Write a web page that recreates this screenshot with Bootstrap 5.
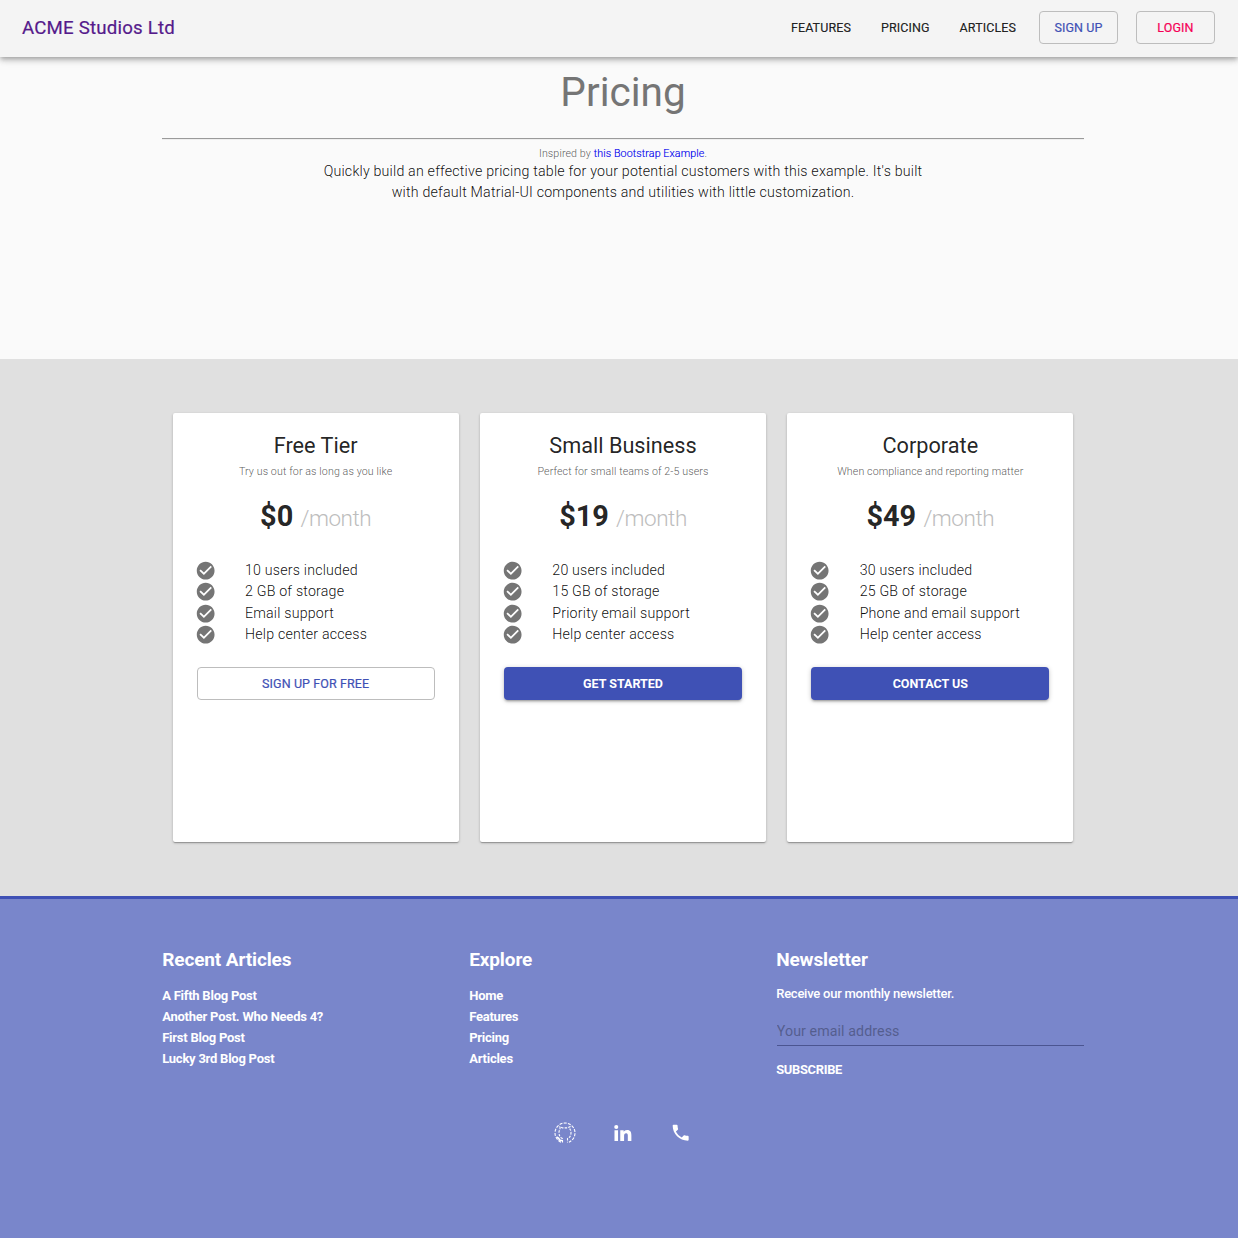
<!DOCTYPE html>
<html lang="en">
<head>
<meta charset="utf-8">
<meta name="viewport" content="width=device-width, initial-scale=1">
<title>ACME Studios Ltd - Pricing</title>
<link href="https://cdn.jsdelivr.net/npm/bootstrap@5.3.0/dist/css/bootstrap.min.css" rel="stylesheet">
<style>
body{font-family:Roboto,"Liberation Sans",sans-serif;font-size:14.22px;background:#fafafa;color:rgba(0,0,0,.87);height:1238px;overflow:hidden}
.site-bar{height:57px;padding:0 23px 2px 22px;background:#f4f4f4;box-shadow:0 2px 4px -1px rgba(0,0,0,.2),0 4px 5px 0 rgba(0,0,0,.14),0 1px 10px 0 rgba(0,0,0,.12);position:relative;z-index:2}
.site-bar .navbar-brand{font-size:18.67px;font-weight:400;letter-spacing:.2px;color:#551a8b;padding:0;line-height:30px;-webkit-text-stroke:.2px #551a8b}
.mui-btn{font-size:12.5px;font-weight:400;line-height:21px;padding:5px 14px;border:1px solid transparent;border-radius:4px;color:rgba(0,0,0,.87);text-transform:uppercase;letter-spacing:.1px;-webkit-text-stroke:.2px currentColor}
.mui-outline{border-color:#bdbdbd;min-width:79px}
.signup-link{margin-right:18px}
.indigo,.indigo:hover{color:#3f51b5}
.pink{color:#f50057}
.solid-indigo{background:#3f51b5;color:#fff;font-weight:700;letter-spacing:0;box-shadow:0 1px 5px rgba(0,0,0,.2),0 2px 2px rgba(0,0,0,.14),0 3px 1px -2px rgba(0,0,0,.12);-webkit-text-stroke:0}
.page-wrap{width:922px;margin-left:162px}
.hero{height:302px}
.hero h1{font-size:40.5px;line-height:48px;font-weight:400;color:#757575;padding-top:11px;margin:0}
.hero hr{margin:22px 0 6px;border-top:1px solid #9a9a9a;border-bottom:1px solid #eee;opacity:1}
.fine{font-size:10.67px;line-height:16px;font-weight:300;letter-spacing:.11px;color:rgba(0,0,0,.68)}
.fine a{color:#00e;text-decoration:none;-webkit-text-stroke:.15px #00e}
.body-light{font-size:14.22px;line-height:21.33px;font-weight:300;letter-spacing:.19px;color:rgba(0,0,0,.95)}
.hero .body-light{margin-top:-1px}
.tiers{background:#e0e0e0;height:537px;padding-top:54px}
.tier{width:286px;height:429px;background:#fff;border:0;border-radius:2px;padding:19px 24px;box-shadow:0 1px 3px rgba(0,0,0,.2),0 1px 1px rgba(0,0,0,.14),0 2px 1px -1px rgba(0,0,0,.12)}
.tier h2{font-size:21.7px;line-height:28px;font-weight:400;margin:0}
.price{font-size:28.9px;line-height:36px;font-weight:700;margin-top:18px}
.price span{font-size:22.5px;letter-spacing:-.45px;font-weight:300;color:#bdbdbd}
.perks{margin:24px 0 21.67px}
.perks li{height:21.33px;display:flex;align-items:center}
.perks svg{width:21.33px;height:21.33px;margin-left:-2px;margin-right:29px;fill:#757575;flex:none}
.site-foot{height:342px;background:#7986cb;border-top:3px solid #3f51b5;color:#fff;padding-top:47px}
.site-foot h3{font-size:19px;line-height:27px;font-weight:700;letter-spacing:-.12px;margin:0 0 12px}
.foot-col{width:307px;padding-left:.2px}
.foot-col a{display:block;color:#fff;text-decoration:none;line-height:21px}
.strong-sm{font-size:13px;font-weight:700;letter-spacing:-.24px}
.news-line{font-weight:500;line-height:21px;margin-top:-2px}
.mail{font-size:14.22px;letter-spacing:.08px;font-weight:400;background:none;border:0;border-bottom:1px solid #4b5591;border-radius:0;padding:0;height:30px;width:307px;display:block;color:#fff;margin:12px 0 13px .6px}
.mail::placeholder{color:#000;opacity:.3}
.mail:focus{outline:0}
.foot-col .subscribe{letter-spacing:-.3px;font-size:12.9px}
.socials{height:24px;margin-top:41px;padding-left:392.4px;gap:36px}
.socials svg{width:21.33px;height:21.33px;fill:#fff}
.socials .octo{width:22px;height:22px;fill:none;stroke:#fff;stroke-width:1.1}
</style>
</head>
<body>
<nav class="navbar site-bar d-flex align-items-center justify-content-between flex-nowrap">
  <a class="navbar-brand" href="#">ACME Studios Ltd</a>
  <div class="d-flex align-items-center">
    <a class="btn mui-btn" href="#">Features</a>
    <a class="btn mui-btn" href="#">Pricing</a>
    <a class="btn mui-btn me-2" href="#">Articles</a>
    <a class="btn mui-btn mui-outline signup-link indigo" href="#">Sign Up</a>
    <a class="btn mui-btn mui-outline pink" href="#">Login</a>
  </div>
</nav>
<main>
  <section class="hero text-center">
    <div class="page-wrap">
      <h1>Pricing</h1>
      <hr>
      <div class="fine">Inspired by <a href="#">this Bootstrap Example</a>.</div>
      <div class="body-light">Quickly build an effective pricing table for your potential customers with this example. It's built<br>with default Matrial-UI components and utilities with little customization.</div>
    </div>
  </section>
  <section class="tiers">
    <div class="page-wrap d-flex justify-content-around" id="tiers">
      <article class="card tier">
        <div class="text-center"><h2>Free Tier</h2><div class="fine mt-1">Try us out for as long as you like</div><div class="price">$0 <span>/month</span></div></div>
        <ul class="list-unstyled perks body-light"><li>10 users included</li><li>2 GB of storage</li><li>Email support</li><li>Help center access</li></ul>
        <a class="btn mui-btn mui-outline indigo" href="#">Sign up for free</a>
      </article>
      <article class="card tier">
        <div class="text-center"><h2>Small Business</h2><div class="fine mt-1">Perfect for small teams of 2-5 users</div><div class="price">$19 <span>/month</span></div></div>
        <ul class="list-unstyled perks body-light"><li>20 users included</li><li>15 GB of storage</li><li>Priority email support</li><li>Help center access</li></ul>
        <a class="btn mui-btn solid-indigo" href="#">Get started</a>
      </article>
      <article class="card tier">
        <div class="text-center"><h2>Corporate</h2><div class="fine mt-1">When compliance and reporting matter</div><div class="price">$49 <span>/month</span></div></div>
        <ul class="list-unstyled perks body-light"><li>30 users included</li><li>25 GB of storage</li><li>Phone and email support</li><li>Help center access</li></ul>
        <a class="btn mui-btn solid-indigo" href="#">Contact us</a>
      </article>
    </div>
  </section>
</main>
<footer class="site-foot">
  <div class="page-wrap">
    <div class="d-flex">
      <div class="foot-col strong-sm"><h3>Recent Articles</h3><a href="#">A Fifth Blog Post</a><a href="#">Another Post. Who Needs 4?</a><a href="#">First Blog Post</a><a href="#">Lucky 3rd Blog Post</a></div>
      <div class="foot-col strong-sm"><h3>Explore</h3><a href="#">Home</a><a href="#">Features</a><a href="#">Pricing</a><a href="#">Articles</a></div>
      <div class="foot-col strong-sm"><h3>Newsletter</h3><div class="news-line">Receive our monthly newsletter.</div><input class="mail" type="email" placeholder="Your email address"><a href="#" class="subscribe">SUBSCRIBE</a></div>
    </div>
    <div class="socials d-flex align-items-center">
      <svg class="octo" viewBox="0 0 22 22"><path d="M7 20.200C3.500 18.500 1 15.200 1 11a10 10 0 0 1 20 0c0 4.200-2.500 7.500-6 9.200" stroke-dasharray="3 1.300"/><path d="M8.500 20.500v-4C6 15.500 5 13.500 5 10.500c0-1.500.3-2.300 1-3.200V4.700l2.500 1.200h5L16 4.700v2.600c.7.900 1 1.700 1 3.200 0 3-1 5-3.500 6v4" stroke-dasharray="2.500 1.200"/><path d="M2.500 15l2 1.200 1.500 2 2.300.3" stroke-width="1.600"/></svg>
      <svg viewBox="0 0 24 24"><path d="M2.500 8.500h4v12h-4zM4.500 2.500a2.300 2.300 0 1 1 0 4.600 2.300 2.300 0 0 1 0-4.600zM9 8.500h3.800v1.700c.6-1 1.900-2 3.900-2 4 0 4.800 2.700 4.800 6v6.300h-4v-5.600c0-1.400 0-3.100-1.900-3.100s-2.300 1.400-2.300 3v5.700H9z" transform="translate(.3 .8)"/></svg>
      <svg viewBox="0 0 24 24"><path d="M6.620 10.790c1.440 2.830 3.760 5.140 6.590 6.590l2.200-2.200c.27-.27.67-.36 1.020-.24 1.120.37 2.330.57 3.570.57.55 0 1 .45 1 1V20c0 .55-.45 1-1 1-9.390 0-17-7.610-17-17 0-.55.45-1 1-1h3.500c.55 0 1 .45 1 1 0 1.250.2 2.450.57 3.570.11.35.03.74-.25 1.020z"/></svg>
    </div>
  </div>
</footer>
<script src="https://cdn.jsdelivr.net/npm/bootstrap@5.3.0/dist/js/bootstrap.bundle.min.js"></script>
<script>
// Each plan feature starts with the same check icon.
document.querySelectorAll('.perks li').forEach(li => li.insertAdjacentHTML('afterbegin',
 '<svg viewBox="0 0 24 24"><path d="M12 2C6.480 2 2 6.480 2 12s4.480 10 10 10 10-4.480 10-10S17.520 2 12 2zm-2 15-5-5 1.410-1.410L10 14.170l7.590-7.590L19 8z"/></svg>'));
</script>
</body>
</html>
